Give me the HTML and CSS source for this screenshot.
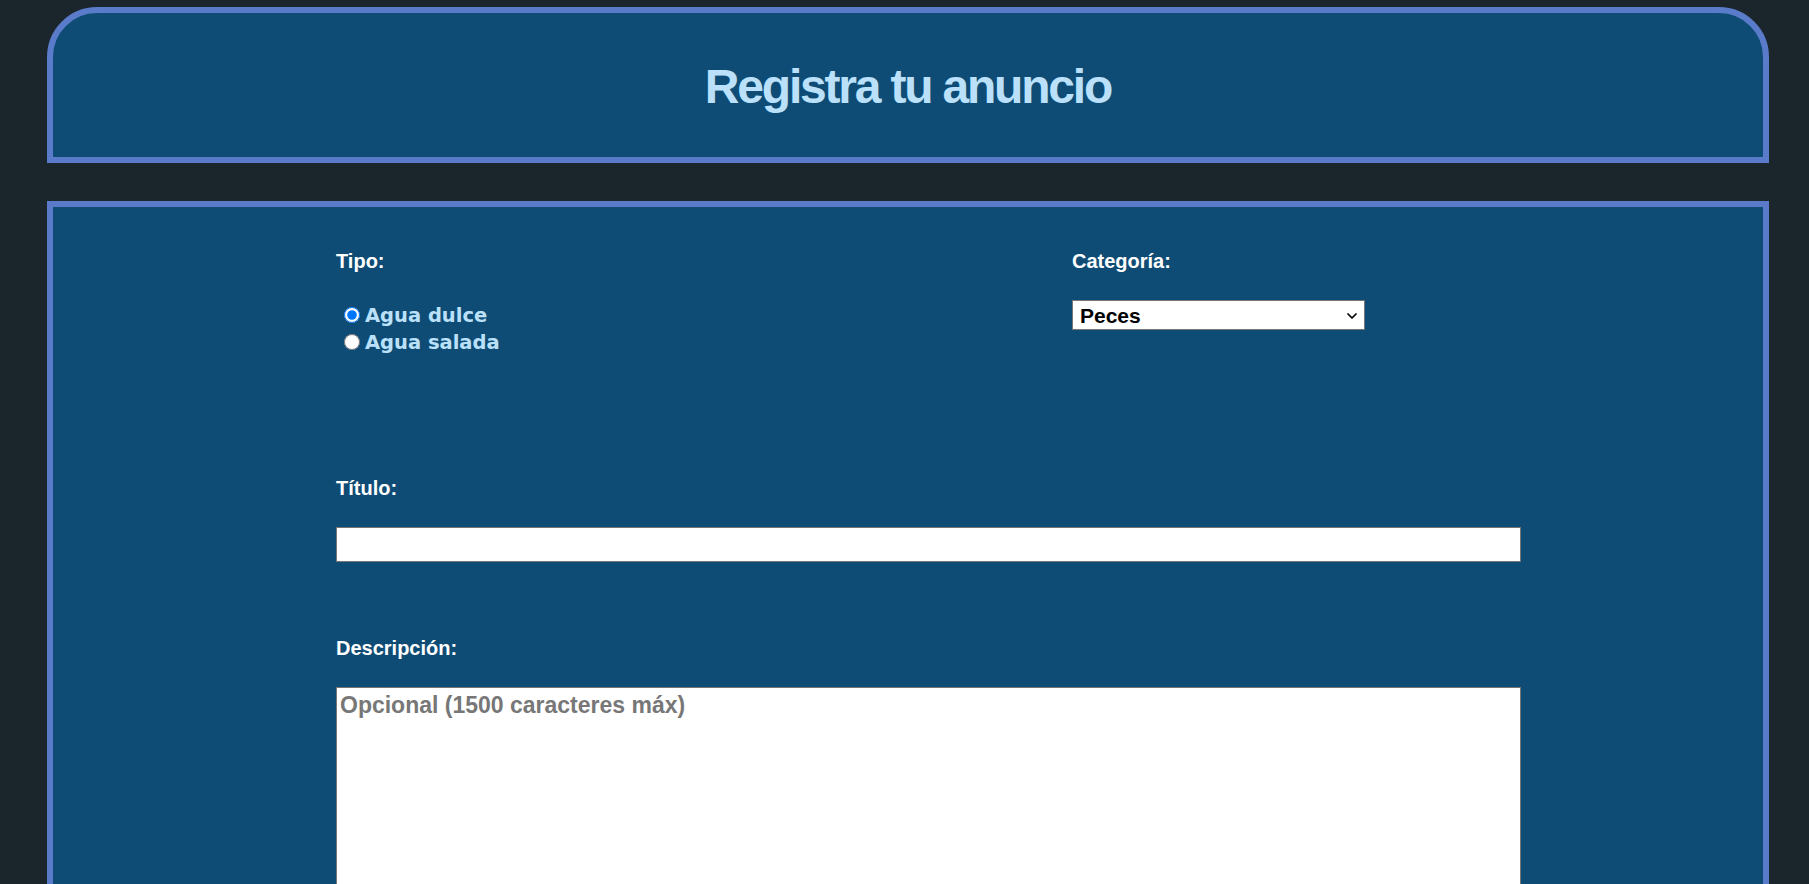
FILE: index.html
```html
<!DOCTYPE html>
<html lang="es">
<head>
<meta charset="utf-8">
<title>Registra tu anuncio</title>
<link rel="stylesheet" href="styles.css">
</head>
<body>
<div class="page">
  <header class="banner">
    <h1 class="banner-title">Registra tu anuncio</h1>
  </header>
  <main class="panel">
    <form class="ad-form">
      <div class="row-top">
        <div class="field">
          <span class="label">Tipo:</span>
          <div class="radios">
            <label class="radio-row"><input class="radio" type="radio" name="tipo" checked><span>Agua dulce</span></label>
            <label class="radio-row"><input class="radio" type="radio" name="tipo"><span>Agua salada</span></label>
          </div>
        </div>
        <div class="field">
          <label class="label" for="cat">Categoría:</label>
          <div class="select-wrap">
            <select id="cat" class="select">
              <option>Peces</option>
              <option>Plantas</option>
              <option>Invertebrados</option>
              <option>Accesorios</option>
            </select>
            <svg class="chevron" viewBox="0 0 10 6" aria-hidden="true"><path d="M1 1 L5 5 L9 1" fill="none" stroke="#000" stroke-width="1.7" stroke-linecap="round" stroke-linejoin="round"/></svg>
          </div>
        </div>
      </div>
      <div class="field field-titulo">
        <label class="label" for="titulo">Título:</label>
        <input id="titulo" class="text-input" type="text">
      </div>
      <div class="field field-desc">
        <label class="label" for="desc">Descripción:</label>
        <textarea id="desc" class="textarea" placeholder="Opcional (1500 caracteres máx)"></textarea>
      </div>
    </form>
  </main>
</div>
</body>
</html>
```
FILE: styles.css
```css
* {
  box-sizing: border-box;
}

html {
  overflow: hidden;
}

html,
body {
  margin: 0;
  background: #1b262c;
}

body {
  font-family: "Liberation Sans", Arial, sans-serif;
}

.page {
  padding: 7px 40px 0 47px;
}

.banner {
  height: 156px;
  border: 6px solid #5a7bc9;
  border-radius: 50px 50px 0 0;
  background: #0f4c75;
  display: flex;
  justify-content: center;
}

.banner-title {
  margin: 45.5px 0 0;
  font-size: 48px;
  line-height: 56px;
  letter-spacing: -2.2px;
  font-weight: 700;
  color: #bbe1fa;
}

.panel {
  margin-top: 38px;
  border: 6px solid #5a7bc9;
  background: #0f4c75;
  padding: 42px 242px 80px 283px;
}

.label {
  display: block;
  font-size: 20px;
  line-height: 24px;
  font-weight: 700;
  color: #ffffff;
}

.row-top {
  display: grid;
  grid-template-columns: 736px 1fr;
}

.radios {
  margin-top: 28.6px;
  display: flex;
  flex-direction: column;
}

.radio-row {
  display: flex;
  align-items: center;
  height: 27px;
  line-height: 27px;
  font-family: "DejaVu Sans", sans-serif;
  font-weight: 700;
  font-size: 19.5px;
  color: #bbe1fa;
}

.radio {
  width: 16px;
  height: 16px;
  margin: 0 5px 0 8px;
}

.select-wrap {
  position: relative;
  margin-top: 27.2px;
  width: 293px;
}

.select {
  display: block;
  width: 100%;
  height: 30px;
  padding: 0 24px 0 7px;
  font-family: "Liberation Sans", Arial, sans-serif;
  font-weight: 700;
  font-size: 21px;
  color: #000000;
  background: #ffffff;
  border: 1px solid #767676;
  border-radius: 0;
  appearance: none;
  -webkit-appearance: none;
}

.chevron {
  position: absolute;
  right: 8px;
  top: 13px;
  width: 10px;
  height: 6px;
  pointer-events: none;
}

.field-titulo {
  margin-top: 120.4px;
}

.text-input {
  display: block;
  margin-top: 26.9px;
  width: 100%;
  height: 35px;
  border: 1px solid #767676;
  border-radius: 0;
  background: #ffffff;
}

.field-desc {
  margin-top: 74.4px;
}

.textarea {
  display: block;
  margin-top: 26.6px;
  width: 100%;
  height: 320px;
  padding: 4px 3px;
  font-family: "Liberation Sans", Arial, sans-serif;
  font-weight: 700;
  font-size: 23px;
  line-height: 1.15;
  border: 1px solid #767676;
  border-radius: 0;
  background: #ffffff;
  resize: vertical;
}

.textarea::placeholder {
  color: #777777;
}
```
